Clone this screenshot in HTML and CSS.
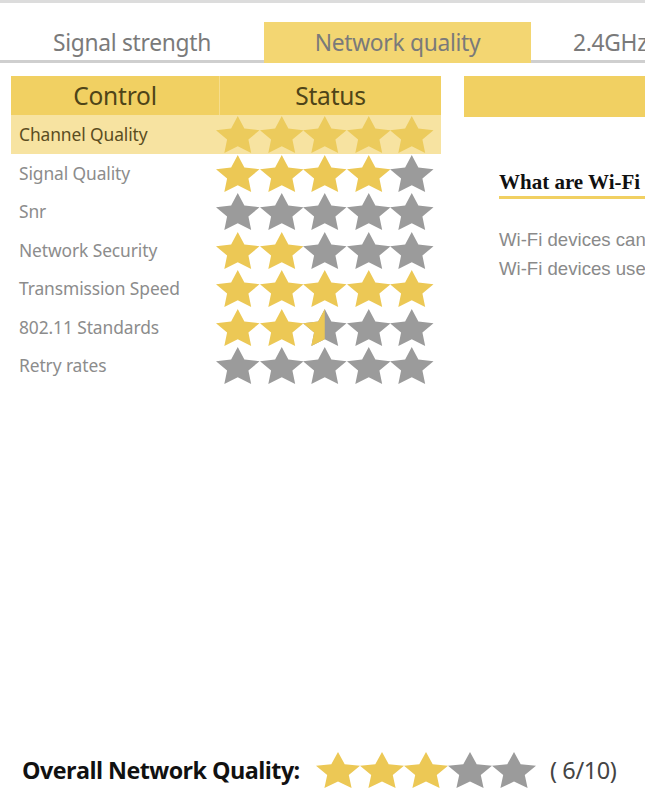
FILE: index.html
```html
<!DOCTYPE html>
<html>
<head>
<meta charset="utf-8">
<link rel="stylesheet" href="styles.css">
</head>
<body>
<div class="page">
  <div class="topline"></div>
  <div class="tabs">
    <div class="tab">Signal strength</div>
    <div class="tab active">Network quality</div>
    <div class="tab">2.4GHz band</div>
  </div>
  <div class="main">
    <div class="table">
      <div class="thead">
        <div class="th th-control">Control</div>
        <div class="th">Status</div>
      </div>
      <div class="row hl"><div class="label">Channel Quality</div><div class="stars" data-v="5"></div></div>
      <div class="row"><div class="label">Signal Quality</div><div class="stars" data-v="4"></div></div>
      <div class="row"><div class="label">Snr</div><div class="stars" data-v="0"></div></div>
      <div class="row"><div class="label">Network Security</div><div class="stars" data-v="2"></div></div>
      <div class="row"><div class="label">Transmission Speed</div><div class="stars" data-v="5"></div></div>
      <div class="row"><div class="label">802.11 Standards</div><div class="stars" data-v="2.5"></div></div>
      <div class="row"><div class="label">Retry rates</div><div class="stars" data-v="0"></div></div>
    </div>
    <div class="side">
      <div class="side-bar"></div>
      <div class="side-body">
        <h3 class="side-title">What are Wi-Fi standards?</h3>
        <p class="side-text">Wi-Fi devices can connect using different standards.</p>
        <p class="side-text">Wi-Fi devices use the 802.11 family of protocols.</p>
      </div>
    </div>
  </div>
  <div class="footer">
    <span class="overall">Overall Network Quality:</span>
    <div class="stars big" data-v="3"></div>
    <span class="score">( 6/10)</span>
  </div>
</div>
<script src="app.js"></script>
</body>
</html>
```
FILE: styles.css
```css
html, body { margin: 0; padding: 0; background: #fff; }
body { width: 645px; overflow: hidden; font-family: "Noto Sans", "Open Sans", sans-serif; }
.page { min-height: 800px; display: flex; flex-direction: column; }
.topline { height: 3px; background: #dcdcdc; }
.tabs { display: flex; margin-top: 19px; height: 38px; border-bottom: 3px solid #cfcfcf; white-space: nowrap; }
.tab { flex: none; height: 41px; box-sizing: border-box; padding-top: 5px; text-align: center; font-size: 22.8px; color: #7a7a7a; letter-spacing: -0.3px; }
.tab:nth-child(1) { width: 264px; }
.tab:nth-child(2) { width: 267px; }
.tab:nth-child(3) { width: 150px; text-align: left; padding-left: 42px; }
.tab.active { background: #f3d672; }
.main { display: flex; margin-top: 13px; padding-left: 11px; }
.table { width: 430px; flex: none; }
.thead { display: grid; grid-template-columns: 209px 221px; height: 39px; background: #f1d062; }
.th { text-align: center; font-size: 24.5px; line-height: 39px; color: #4e4418; letter-spacing: -0.2px; }
.th-control { border-right: 1px solid #f6dd8c; }
.row { display: grid; grid-template-columns: 205px 225px; height: 38.5px; align-items: center; }
.row.hl { height: 39px; background: #f7e3a1; }
.label { padding-left: 8px; font-size: 17.4px; color: #8c8c8c; letter-spacing: -0.1px; padding-bottom: 1px; }
.row.hl .label { color: #5b4d1f; }
.stars { display: flex; }
.stars svg { width: 43.5px; height: 37px; flex: none; display: block; }
.row.hl .stars svg .on { fill: #eccb5c; }
.side { flex: 1; margin-left: 23px; min-width: 0; overflow: hidden; }
.side-bar { height: 41px; background: #f1d062; }
.side-body { padding-left: 35px; white-space: nowrap; }
.side-title { margin: 53px 0 0; font-family: "Liberation Serif", serif; font-weight: bold; font-size: 21px; line-height: 24px; color: #111; padding-bottom: 2px; border-bottom: 3px solid #f1d062; }
.side-text { margin: 0; font-family: "Liberation Sans", Arial, sans-serif; font-size: 18.6px; color: #8a8a8a; line-height: 29px; }
.side-title + .side-text { margin-top: 26px; }
.footer { margin-top: auto; height: 56px; padding-bottom: 2px; display: flex; align-items: center; padding-left: 22px; }
.overall { font-family: "Open Sans", sans-serif; font-weight: 700; font-size: 23.3px; color: #111; letter-spacing: -0.55px; width: 294px; }
.stars.big svg { width: 44px; height: 36px; }
.score { margin-left: 14px; font-size: 23.5px; color: #444; letter-spacing: -0.4px; }
.on { fill: #ecc855; }
.off { fill: #9b9b9b; }
```
FILE: app.js
```js
(function () {
  var P = "M12 1.6l3.1 6.6 7.1 0.9-5.2 4.9 1.3 7.1L12 17.6l-6.3 3.5 1.3-7.1L1.8 9.1l7.1-0.9z";
  var n = 0;
  document.querySelectorAll('.stars').forEach(function (el) {
    var v = parseFloat(el.getAttribute('data-v'));
    var html = '';
    for (var i = 0; i < 5; i++) {
      var f = Math.max(0, Math.min(1, v - i));
      var svg = '<svg viewBox="1.8 1.6 20.4 19.5" preserveAspectRatio="none">';
      if (f >= 1) {
        svg += '<path class="on" d="' + P + '"/>';
      } else if (f <= 0) {
        svg += '<path class="off" d="' + P + '"/>';
      } else {
        n++;
        var id = 'half' + n;
        svg += '<defs><clipPath id="' + id + '"><rect x="0" y="0" width="' + (1.8 + 20.4 * f) + '" height="24"/></clipPath></defs>';
        svg += '<path class="off" d="' + P + '"/>';
        svg += '<path class="on" clip-path="url(#' + id + ')" d="' + P + '"/>';
      }
      svg += '</svg>';
      html += svg;
    }
    el.innerHTML = html;
  });
})();
```
